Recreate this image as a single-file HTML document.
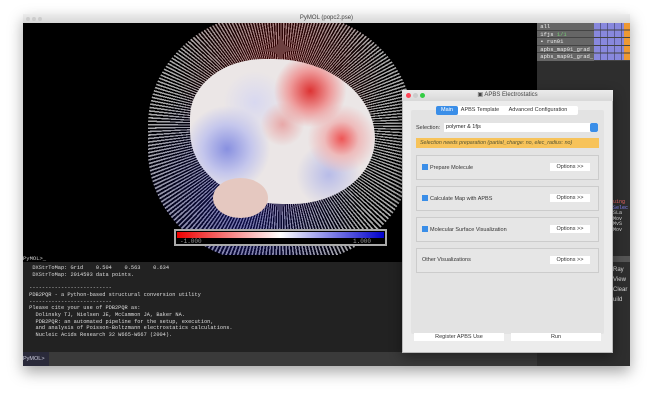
<!DOCTYPE html>
<html><head><style>
*{margin:0;padding:0;box-sizing:border-box}
body{width:654px;height:400px;background:#fff;position:relative;overflow:hidden;font-family:"Liberation Sans",sans-serif}
.abs{position:absolute}
.mono{font-family:"Liberation Mono",monospace}
</style></head><body>
<div class="abs" style="left:23px;top:14px;width:607px;height:352px;background:#222;box-shadow:0 6px 14px rgba(0,0,0,.35)"></div>
<div class="abs" style="left:23px;top:14px;width:607px;height:9px;background:linear-gradient(#ececec,#d6d6d6);font-size:6px;color:#444;text-align:center;line-height:9px">PyMOL (popc2.pse)</div>
<div class="abs" style="left:26px;top:17px;width:4px;height:4px;border-radius:50%;background:#ccc"></div>
<div class="abs" style="left:32px;top:17px;width:4px;height:4px;border-radius:50%;background:#ccc"></div>
<div class="abs" style="left:38px;top:17px;width:4px;height:4px;border-radius:50%;background:#ccc"></div>
<div class="abs" style="left:23px;top:23px;width:514px;height:232px;background:#000;overflow:hidden">
 <div class="abs" style="left:125px;top:-10px;width:265px;height:250px;border-radius:45%;background:repeating-conic-gradient(from 0deg at 50% 45%,rgba(225,225,225,.75) 0deg 0.7deg,rgba(0,0,0,0) 0.7deg 1.5deg);"></div>
 <div class="abs" style="left:125px;top:-10px;width:265px;height:250px;border-radius:45%;background:radial-gradient(ellipse at 50% 25%,rgba(160,20,20,.4),transparent 55%),radial-gradient(ellipse at 35% 80%,rgba(30,30,180,.4),transparent 50%)"></div>
 <div class="abs" style="left:167px;top:36px;width:185px;height:145px;border-radius:40% 55% 45% 50%;background:radial-gradient(circle at 65% 22%,#d33 0,#e99 12%,transparent 22%),radial-gradient(circle at 20% 62%,#8890e0 0,#c4c6ec 14%,transparent 25%),radial-gradient(circle at 82% 55%,#e55 0,#ebb 10%,transparent 20%),radial-gradient(circle at 50% 45%,#e8a8a8 0,transparent 18%),radial-gradient(circle at 35% 30%,#d8d8f0 0,transparent 20%),radial-gradient(circle at 75% 80%,#b8bce8 0,transparent 18%),#ebe6e6"></div>
 <div class="abs" style="left:190px;top:155px;width:55px;height:40px;border-radius:50%;background:#e5c8c0"></div>
 <div class="abs" style="left:151px;top:206px;width:213px;height:17px;background:#000;border:2px solid #aaa"></div>
 <div class="abs" style="left:154px;top:209px;width:207px;height:6px;background:linear-gradient(90deg,#e00,#fff 50%,#00c)"></div>
 <div class="abs mono" style="left:157px;top:215px;font-size:6px;color:#999">-1.000</div>
 <div class="abs mono" style="left:330px;top:215px;font-size:6px;color:#999">1.000</div>
</div>
<div class="abs" style="left:537px;top:23px;width:93px;height:343px;background:#2e2e2e"></div>
<div class="abs mono" style="left:537px;top:23px;width:93px;font-size:5.5px;color:#eee;line-height:7.6px">
 <div style="background:#666;height:7.6px;border-bottom:1px solid #444">&nbsp;all</div>
 <div style="background:#666;height:7.6px;border-bottom:1px solid #444">&nbsp;1fjs <span style="color:#7c7">1/1</span></div>
 <div style="background:#666;height:7.6px;border-bottom:1px solid #444">&nbsp;▪ run01</div>
 <div style="background:#666;height:7.6px;border-bottom:1px solid #444">&nbsp;apbs_map01_grad</div>
 <div style="background:#666;height:7.6px">&nbsp;apbs_map01_grad_</div>
</div>
<div class="abs" style="left:594px;top:23px;width:30px;height:38px;background:repeating-linear-gradient(90deg,#88d 0 6px,#5a5a90 6px 7px),#88d"></div>
<div class="abs" style="left:594px;top:23px;width:30px;height:38px;background:repeating-linear-gradient(transparent 0 6.6px,#444 6.6px 7.6px)"></div>
<div class="abs" style="left:624px;top:23px;width:6px;height:38px;background:repeating-linear-gradient(#e93 0 6.6px,#444 6.6px 7.6px)"></div>
<div class="abs mono" style="left:613px;top:200px;font-size:5px;line-height:5.5px;color:#ddd"><span style="color:#e66">uing</span><br><span style="color:#88f">Selec</span><br>SLa<br>Mov<br>MvS<br>Mov</div>
<div class="abs" style="left:613px;top:256px;width:17px;height:6px;background:#555"></div>
<div class="abs" style="left:613px;top:265px;font-size:6px;line-height:10px;color:#ddd">Ray<br>View<br>Clear<br>uild</div>
<div class="abs mono" style="left:23px;top:255px;width:514px;height:7px;background:#000;font-size:5.5px;color:#ccc;line-height:7px">PyMOL&gt;_</div>
<div class="abs mono" style="left:26px;top:265px;font-size:5.3px;line-height:6.7px;color:#ddd;white-space:pre">  DXStrToMap: Grid    0.504    0.563    0.634
  DXStrToMap: 2014593 data points.

 --------------------------
 PDB2PQR - a Python-based structural conversion utility
 --------------------------
 Please cite your use of PDB2PQR as:
   Dolinsky TJ, Nielsen JE, McCammon JA, Baker NA.
   PDB2PQR: an automated pipeline for the setup, execution,
   and analysis of Poisson-Boltzmann electrostatics calculations.
   Nucleic Acids Research 32 W665-W667 (2004).</div>
<div class="abs" style="left:23px;top:352px;width:514px;height:14px;background:#3a3a3a"></div>
<div class="abs" style="left:23px;top:352px;width:26px;height:14px;background:#2a2a3a;font-size:5.5px;color:#ccd;line-height:14px">PyMOL&gt;</div>
<div class="abs" style="left:402px;top:90px;width:211px;height:263px;background:#ececec;border:1px solid #bbb;box-shadow:0 4px 12px rgba(0,0,0,.4)"></div>
<div class="abs" style="left:402px;top:90px;width:211px;height:11px;background:linear-gradient(#ebebeb,#d8d8d8);font-size:6px;color:#444;text-align:center;line-height:11px">▣ APBS Electrostatics</div>
<div class="abs" style="left:406px;top:93px;width:5px;height:5px;border-radius:50%;background:#f45"></div>
<div class="abs" style="left:413px;top:93px;width:5px;height:5px;border-radius:50%;background:#ccc"></div>
<div class="abs" style="left:420px;top:93px;width:5px;height:5px;border-radius:50%;background:#3c4"></div>
<div class="abs" style="left:411px;top:110px;width:193px;height:224px;background:#e3e3e3;border-radius:2px"></div>
<div class="abs" style="left:436px;top:106px;width:142px;height:9px;background:#fff;border-radius:2px;font-size:5.5px;line-height:9px;color:#333">
 <span style="display:inline-block;background:#3a8ee8;color:#fff;width:22px;text-align:center;border-radius:2px">Main</span><span style="display:inline-block;width:44px;text-align:center">APBS Template</span><span style="display:inline-block;width:72px;text-align:center">Advanced Configuration</span></div>
<div class="abs" style="left:416px;top:124px;font-size:5.5px;color:#333;line-height:8px">Selection:</div>
<div class="abs" style="left:444px;top:123px;width:154px;height:9px;background:#fff;font-size:5.5px;line-height:9px;padding-left:2px;color:#222">polymer &amp; 1fjs</div>
<div class="abs" style="left:590px;top:123px;width:8px;height:9px;background:#3a8ee8;border-radius:2px"></div>
<div class="abs" style="left:416px;top:138px;width:183px;height:10px;background:#f7c35a;font-size:5.3px;font-style:italic;line-height:10px;padding-left:4px;color:#553">Selection needs preparation (partial_charge: no, elec_radius: no)</div>
<div class="abs" style="left:416px;top:155px;width:183px;height:25px;border:1px solid #ccc;background:#e6e6e6"></div>
<div class="abs" style="left:416px;top:186px;width:183px;height:25px;border:1px solid #ccc;background:#e6e6e6"></div>
<div class="abs" style="left:416px;top:217px;width:183px;height:25px;border:1px solid #ccc;background:#e6e6e6"></div>
<div class="abs" style="left:416px;top:248px;width:183px;height:25px;border:1px solid #ccc;background:#e6e6e6"></div>
<div class="abs" style="left:422px;top:164px;font-size:5.5px;line-height:7px;color:#333"><span style="display:inline-block;width:6px;height:6px;background:#3a8ee8;vertical-align:-1px;margin-right:2px"></span>Prepare Molecule</div>
<div class="abs" style="left:422px;top:195px;font-size:5.5px;line-height:7px;color:#333"><span style="display:inline-block;width:6px;height:6px;background:#3a8ee8;vertical-align:-1px;margin-right:2px"></span>Calculate Map with APBS</div>
<div class="abs" style="left:422px;top:226px;font-size:5.5px;line-height:7px;color:#333"><span style="display:inline-block;width:6px;height:6px;background:#3a8ee8;vertical-align:-1px;margin-right:2px"></span>Molecular Surface Visualization</div>
<div class="abs" style="left:422px;top:257px;font-size:5.5px;line-height:7px;color:#333">Other Visualizations</div>
<div class="abs" style="left:550px;top:163px;width:40px;height:8px;background:#fff;font-size:5.5px;line-height:8px;text-align:center;color:#333">Options &gt;&gt;</div>
<div class="abs" style="left:550px;top:194px;width:40px;height:8px;background:#fff;font-size:5.5px;line-height:8px;text-align:center;color:#333">Options &gt;&gt;</div>
<div class="abs" style="left:550px;top:225px;width:40px;height:8px;background:#fff;font-size:5.5px;line-height:8px;text-align:center;color:#333">Options &gt;&gt;</div>
<div class="abs" style="left:550px;top:256px;width:40px;height:8px;background:#fff;font-size:5.5px;line-height:8px;text-align:center;color:#333">Options &gt;&gt;</div>
<div class="abs" style="left:414px;top:333px;width:90px;height:8px;background:#fff;font-size:5.5px;line-height:8px;text-align:center;color:#333">Register APBS Use</div>
<div class="abs" style="left:511px;top:333px;width:90px;height:8px;background:#fff;font-size:5.5px;line-height:8px;text-align:center;color:#333">Run</div>
</body></html>
